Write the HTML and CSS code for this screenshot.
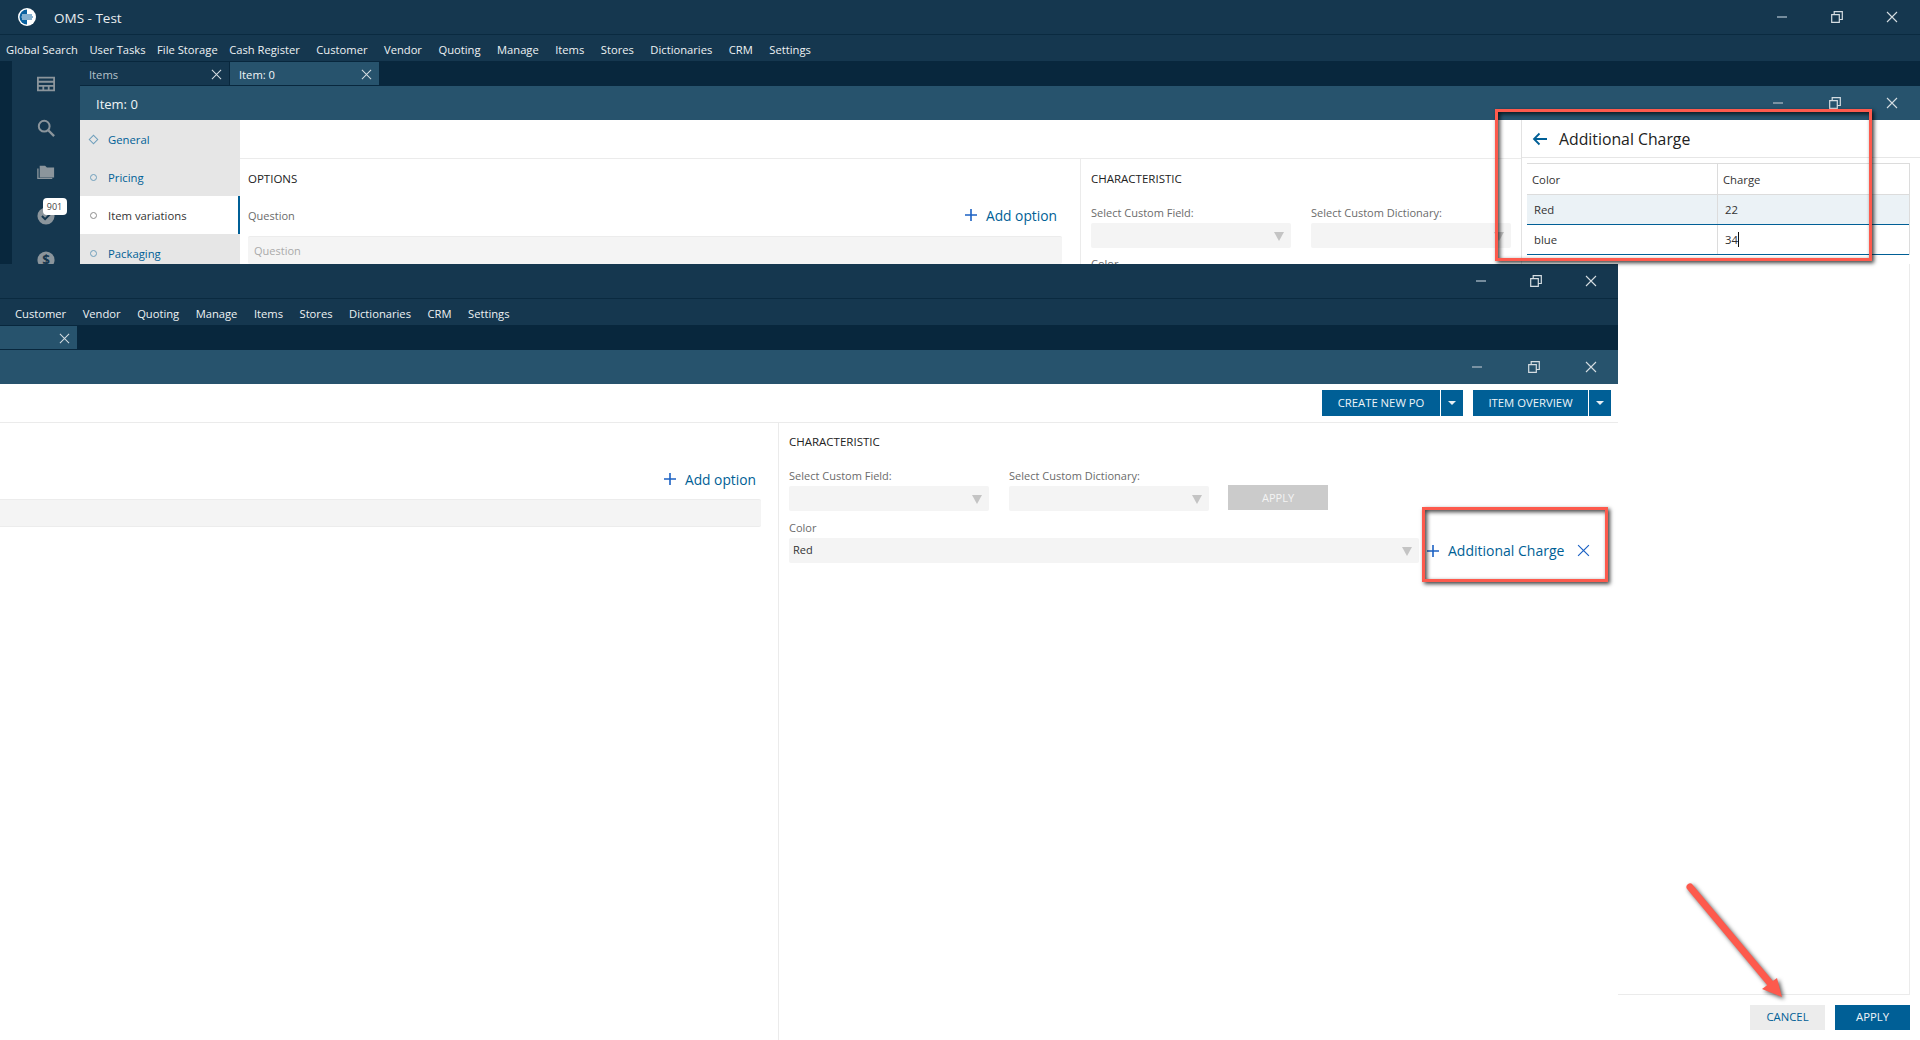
FILE: index.html
```html
<!DOCTYPE html>
<html lang="en">
<head>
<meta charset="utf-8">
<title>OMS - Test</title>
<link rel="stylesheet" href="styles.css">
</head>
<body>
<svg class="defs" width="0" height="0" aria-hidden="true">
  <symbol id="i-min" viewBox="0 0 12 12"><path d="M1 6h10" stroke="currentColor" stroke-width="1.6" fill="none"/></symbol>
  <symbol id="i-restore" viewBox="0 0 12 12"><path d="M.7 3.7h7.6v7.6H.7zM3.2 3.5V.7h8.1v7.8H8.5" stroke="currentColor" stroke-width="1.2" fill="none"/></symbol>
  <symbol id="i-x" viewBox="0 0 12 12"><path d="M1 1l10 10M11 1L1 11" stroke="currentColor" stroke-width="1.1" fill="none"/></symbol>
  <symbol id="i-plus" viewBox="0 0 12 12"><path d="M6 0v12M0 6h12" stroke="currentColor" stroke-width="1.6" fill="none"/></symbol>
</svg>

<div class="shot shot-top">
  <header class="titlebar">
    <svg class="logo" viewBox="0 0 18 18"><circle cx="9" cy="9" r="9" fill="#fff"/><path d="M9 1.5A7.5 7.5 0 0 0 9 16.500z" fill="#0a62a0"/><path d="M4 7h9M3.500 9h11M4 11h9" stroke="#fff" stroke-width="1"/><path d="M9 7h5M9 9h6M9 11h5" stroke="#0a62a0" stroke-width="1"/></svg>
    <span class="app-name">OMS - Test</span>
    <div class="winctl winctl-top">
      <svg class="ic-min"><use href="#i-min"/></svg>
      <svg class="ic-restore"><use href="#i-restore"/></svg>
      <svg class="ic-x"><use href="#i-x"/></svg>
    </div>
  </header>
  <nav class="menu">
    <div class="menu-group"><span>Global Search</span><span>User Tasks</span><span>File Storage</span><span>Cash Register</span></div>
    <span>Customer</span><span>Vendor</span><span>Quoting</span><span>Manage</span><span>Items</span><span>Stores</span><span>Dictionaries</span><span>CRM</span><span>Settings</span>
  </nav>
  <div class="shell">
    <aside class="rail">
      <div class="rail-strip"></div>
      <div class="rail-icons">
        <svg class="rail-ic" viewBox="0 0 20 16"><path d="M1 1h18v14H1zM1 5.500h18M1 10h18M7 10v5M13 10v5" fill="none" stroke="#8b959c" stroke-width="2"/></svg>
        <svg class="rail-ic" viewBox="0 0 20 20"><circle cx="8" cy="8" r="6" fill="none" stroke="#8b959c" stroke-width="2.2"/><path d="M12.500 12.500L19 19" stroke="#8b959c" stroke-width="2.600"/></svg>
        <svg class="rail-ic" viewBox="0 0 20 16"><path d="M3 1h6l2 2h8v11H3z" fill="#8b959c"/><path d="M1 4v11h16" fill="none" stroke="#8b959c" stroke-width="1.500"/></svg>
        <div class="rail-check">
          <svg class="rail-ic" viewBox="0 0 20 20"><circle cx="10" cy="10" r="9.500" fill="#8b959c"/><path d="M5.500 10l3.500 3.500 6-6" fill="none" stroke="#15374f" stroke-width="2.200"/></svg>
          <span class="badge">901</span>
        </div>
        <div class="rail-dollar">
          <svg class="rail-ic" viewBox="0 0 20 20"><circle cx="10" cy="10" r="9.500" fill="#8b959c"/><text x="10" y="15" text-anchor="middle" class="dollar">$</text></svg>
        </div>
      </div>
    </aside>
    <div class="work">
      <div class="tabs">
        <div class="tab"><span>Items</span><svg class="ic-tabx"><use href="#i-x"/></svg></div>
        <div class="tab tab-on"><span>Item: 0</span><svg class="ic-tabx"><use href="#i-x"/></svg></div>
      </div>
      <div class="winhead">
        <span>Item: 0</span>
        <div class="winctl winctl-sub">
          <svg class="ic-min"><use href="#i-min"/></svg>
          <svg class="ic-restore"><use href="#i-restore"/></svg>
          <svg class="ic-x"><use href="#i-x"/></svg>
        </div>
      </div>
      <div class="doc">
        <ul class="sidenav">
          <li class="done"><i class="dot dot-diamond"></i>General</li>
          <li><i class="dot"></i>Pricing</li>
          <li class="on"><i class="dot"></i>Item variations</li>
          <li><i class="dot"></i>Packaging</li>
        </ul>
        <div class="doc-main">
          <div class="toolbar"></div>
          <div class="panes">
            <section class="pane-options">
              <h3>OPTIONS</h3>
              <div class="q-row">
                <label>Question</label>
                <a class="link"><svg class="ic-plus"><use href="#i-plus"/></svg>Add option</a>
              </div>
              <div class="input input-ph">Question</div>
            </section>
            <section class="pane-char">
              <h3>CHARACTERISTIC</h3>
              <div class="field-row">
                <div class="field"><label>Select Custom Field:</label><div class="select"><i class="tri"></i></div></div>
                <div class="field"><label>Select Custom Dictionary:</label><div class="select"><i class="tri"></i></div></div>
              </div>
              <label class="color-label">Color</label>
            </section>
          </div>
        </div>
      </div>
    </div>
  </div>
</div>

<div class="lower">
  <div class="shot shot-bottom">
    <header class="titlebar">
      <div class="winctl winctl-top2">
        <svg class="ic-min"><use href="#i-min"/></svg>
        <svg class="ic-restore"><use href="#i-restore"/></svg>
        <svg class="ic-x"><use href="#i-x"/></svg>
      </div>
    </header>
    <nav class="menu menu-lower">
      <span>Customer</span><span>Vendor</span><span>Quoting</span><span>Manage</span><span>Items</span><span>Stores</span><span>Dictionaries</span><span>CRM</span><span>Settings</span>
    </nav>
    <div class="tabs">
      <div class="tab tab-on tab-cut"><svg class="ic-tabx"><use href="#i-x"/></svg></div>
    </div>
    <div class="winhead winhead-lower">
      <div class="winctl winctl-sub2">
        <svg class="ic-min"><use href="#i-min"/></svg>
        <svg class="ic-restore"><use href="#i-restore"/></svg>
        <svg class="ic-x"><use href="#i-x"/></svg>
      </div>
    </div>
    <div class="toolbar toolbar-lower">
      <div class="splitbtn"><button>CREATE NEW PO</button><button class="caret-btn"><i class="caret"></i></button></div>
      <div class="splitbtn splitbtn-b"><button>ITEM OVERVIEW</button><button class="caret-btn"><i class="caret"></i></button></div>
    </div>
    <div class="panes panes-lower">
      <section class="pane-options pane-options-lower">
        <div class="q-row q-row-lower">
          <a class="link"><svg class="ic-plus"><use href="#i-plus"/></svg>Add option</a>
        </div>
        <div class="input input-lower"></div>
      </section>
      <section class="pane-char">
        <h3>CHARACTERISTIC</h3>
        <div class="field-row">
          <div class="field"><label>Select Custom Field:</label><div class="select"><i class="tri"></i></div></div>
          <div class="field"><label>Select Custom Dictionary:</label><div class="select"><i class="tri"></i></div></div>
          <button class="apply-off">APPLY</button>
        </div>
        <label class="color-label">Color</label>
        <div class="color-row">
          <div class="select select-wide">Red<i class="tri"></i></div>
          <a class="link link-charge"><svg class="ic-plus"><use href="#i-plus"/></svg>Additional Charge</a>
          <svg class="ic-chargex"><use href="#i-x"/></svg>
        </div>
      </section>
    </div>
  </div>
  <aside class="side-rest">
    <div class="side-blank"></div>
    <div class="side-actions">
      <button class="btn-cancel">CANCEL</button>
      <button class="btn-apply">APPLY</button>
    </div>
  </aside>
</div>

<section class="charge-panel">
  <div class="charge-head">
    <svg class="ic-back" viewBox="0 0 16 14"><path d="M15 7H2M7.500 1.500L2 7l5.500 5.500" fill="none" stroke="#005f96" stroke-width="1.800"/></svg>
    <span>Additional Charge</span>
  </div>
  <div class="charge-table">
    <div class="ct-row ct-head"><div>Color</div><div>Charge</div></div>
    <div class="ct-row ct-sel"><div>Red</div><div>22</div></div>
    <div class="ct-row ct-edit"><div>blue</div><div>34<i class="cursor"></i></div></div>
  </div>
</section>

<div class="callout callout-panel"></div>
<div class="callout callout-charge"></div>
<svg class="callout-arrow" viewBox="0 0 120 140">
  <path d="M6 8L86 104" stroke="#fd5a4d" stroke-width="7" stroke-linecap="round" fill="none"/>
  <path d="M98 118L78 110 93 99z" fill="#fd5a4d"/>
</svg>
</body>
</html>
```
FILE: styles.css
```css
* { box-sizing: border-box; }
html, body { margin: 0; height: 1040px; overflow: hidden; }
body { background: #fff; font-family: "Open Sans", "Noto Sans", sans-serif; font-size: 11px; color: #333; position: relative; }
.defs { position: absolute; }
h3 { margin: 0; font-weight: 400; font-size: 11.500px; color: #222; line-height: 15px; }
label { color: #6b6b6b; font-size: 11px; }
ul { margin: 0; padding: 0; list-style: none; }
button { font-family: inherit; border: 0; margin: 0; padding: 0; }

.shot { display: flex; flex-direction: column; overflow: hidden; background: #fff; }
.shot-top { height: 264px; }

.titlebar { height: 35px; flex: none; background: #15374f; border-bottom: 1px solid #0a2a40; display: flex; align-items: center; position: relative; color: #e8edf0; }
.logo { width: 18px; height: 18px; margin: 0 0 1px 18px; }
.app-name { margin: 2px 0 0 18px; font-size: 13.500px; }

.winctl { display: flex; align-items: center; margin-left: auto; color: #d5dde2; }
.winctl svg { width: 12px; height: 12px; display: block; }
.winctl .ic-min { color: #8fa3b1; }
.winctl-top { padding-right: 22px; gap: 43px; }
.winctl-sub { padding-right: 22px; gap: 45px; }
.winctl-top2 { padding-right: 21px; gap: 43px; }
.winctl-sub2 { padding-right: 21px; gap: 45px; }

.menu { height: 26px; flex: none; background: #15374f; display: flex; align-items: center; padding: 2px 0 0 6px; gap: 16.500px; color: #eef2f4; font-size: 11.200px; }
.menu-group { display: flex; gap: 11.500px; }
.menu-lower { padding-left: 15px; }

.shell { flex: 1; display: flex; min-height: 0; }
.rail { width: 80px; flex: none; display: flex; background: #15374f; }
.rail-strip { width: 12px; background: #08273d; }
.rail-icons { flex: 1; display: flex; flex-direction: column; align-items: center; padding: 14px 1px 0 0; gap: 26px; }
.rail-ic { width: 18px; height: 18px; display: block; flex: none; }
.rail-check, .rail-dollar { position: relative; flex: none; }
.badge { position: absolute; left: 6px; top: -9px; width: 24px; height: 17px; background: #fff; border-radius: 4px; color: #444; font-size: 9px; text-align: center; line-height: 17px; }
.dollar { font-size: 15px; font-weight: 700; fill: #15374f; font-family: "Open Sans", sans-serif; }

.work { flex: 1; display: flex; flex-direction: column; min-width: 0; }
.tabs { height: 25px; flex: none; background: #08273d; display: flex; padding-top: 1px; }
.tab { width: 149px; margin-right: 1px; background: #15374f; color: #b6c2ca; display: flex; align-items: center; justify-content: space-between; padding: 1px 7px 0 9px; font-size: 11.200px; height: 23px; }
.tab-on { background: #27536d; color: #f2f5f7; }
.tab-cut { width: 77px; justify-content: flex-end; }
.ic-tabx { width: 11px; height: 11px; color: #d5dde2; }

.winhead { height: 34px; flex: none; background: #27536d; color: #f0f3f5; display: flex; align-items: center; padding-left: 16px; font-size: 13px; }
.winhead > span { margin-top: 1px; }
.winhead-lower { padding-left: 0; }

.doc { flex: 1; display: flex; min-height: 0; }
.sidenav { width: 160px; flex: none; background: #e6e6e6; }
.sidenav li { height: 38px; display: flex; align-items: center; padding-left: 10px; color: #005f96; font-size: 11.300px; }
.sidenav li.on { background: #fff; color: #333; box-shadow: inset -2px 0 0 #005f96; }
.dot { width: 7px; height: 7px; border: 1.500px solid #6f9fbc; border-radius: 50%; margin-right: 11px; flex: none; }
.sidenav li.on .dot { border-color: #8d8d8d; }
.dot-diamond { border-radius: 0; transform: rotate(45deg); }

.doc-main { flex: 1; display: flex; flex-direction: column; min-width: 0; }
.toolbar { height: 39px; flex: none; border-bottom: 1px solid #ebebeb; }
.panes { flex: 1; display: flex; min-height: 0; }
.pane-options { width: 841px; flex: none; padding: 12px 18px 0 8px; border-right: 1px solid #ebebeb; }
.q-row { display: flex; justify-content: space-between; align-items: center; height: 28px; margin-top: 15px; padding-right: 5px; }
.link { display: inline-flex; align-items: center; color: #005f96; font-size: 13.800px; }
.ic-plus { width: 12px; height: 12px; color: #1c62c4; margin-right: 9px; }
.input { height: 28px; background: #f4f4f4; border-top: 1px solid #ececec; border-radius: 2px; margin-top: 7px; padding: 6px; color: #aaa; font-size: 11px; }

.pane-char { flex: 1; padding: 12px 0 0 10px; min-width: 0; }
.panes-lower .pane-char { padding-top: 11px; }
.field-row { display: flex; gap: 20px; margin-top: 20px; }
.field { width: 200px; display: flex; flex-direction: column; }
.field label { height: 17px; line-height: 14px; }
.select { height: 25px; background: #f4f4f4; border-radius: 2px; position: relative; font-size: 11px; color: #333; padding: 4px; }
.tri { position: absolute; right: 7px; top: 9px; width: 0; height: 0; border: 5px solid transparent; border-top: 9px solid #c4c4c4; border-bottom: 0; }
.color-label { display: block; margin-top: 8px; height: 15px; line-height: 15px; }
.panes-lower .color-label { margin-top: 9px; }

.lower { height: 776px; display: flex; }
.shot-bottom { width: 1618px; flex: none; height: 776px; }
.toolbar-lower { display: flex; justify-content: flex-end; gap: 10px; padding: 6px 7px 0 0; }
.splitbtn { display: flex; gap: 1px; height: 26px; }
.splitbtn button { background: #005f96; color: #eef4f8; font-size: 11.300px; width: 118px; height: 26px; padding-bottom: 1px; }
.splitbtn-b button { width: 115px; }
.splitbtn .caret-btn { width: 22px; display: flex; align-items: center; justify-content: center; }
.caret { width: 0; height: 0; border: 4px solid transparent; border-top: 4px solid #e8eff4; border-bottom: 0; }

.pane-options-lower { width: 779px; padding: 0 17px 0 0; }
.q-row-lower { justify-content: flex-end; height: 28px; margin-top: 42px; padding-right: 5px; }
.input-lower { margin-top: 6px; border-radius: 0 2px 2px 0; border-bottom: 1px solid #ececec; }
.panes-lower .field-row { align-items: flex-end; }
.apply-off { width: 100px; height: 25px; background: #cbcbcb; color: #f4f4f4; font-size: 11px; margin: 0 0 1px -1px; }
.color-row { display: flex; align-items: center; height: 25px; margin-top: 3px; }
.select-wide { width: 630px; flex: none; }
.link-charge { margin-left: 8px; white-space: nowrap; font-size: 14px; }
.ic-chargex { width: 13px; height: 13px; color: #1c62c4; margin-left: 13px; }

.side-rest { flex: 1; display: flex; flex-direction: column; padding-right: 10px; }
.side-blank { height: 731px; flex: none; border-right: 1px solid #ebebeb; border-bottom: 1px solid #ebebeb; }
.side-actions { display: flex; justify-content: flex-end; gap: 10px; margin-top: 10px; }
.side-actions button { width: 75px; height: 25px; font-size: 11.300px; padding-bottom: 2px; }
.btn-cancel { background: #ececec; color: #005f96; }
.btn-apply { background: #005f96; color: #f0f5f8; }

/* floating panel opened over the top window */
.charge-panel { position: absolute; left: 1521px; top: 120px; width: 399px; height: 144px; background: #fff; border-left: 1px solid #e2e2e2; }
.charge-head { height: 38px; border-bottom: 1px solid #e6e6e6; display: flex; align-items: center; padding: 1px 0 0 10px; font-size: 15.800px; color: #222; }
.ic-back { width: 16px; height: 14px; margin-right: 11px; }
.charge-table { margin: 5px 0 0 5px; width: 383px; border-top: 1px solid #dcdcdc; border-right: 1px solid #dcdcdc; }
.ct-row { display: flex; height: 30px; font-size: 11.300px; color: #333; align-items: stretch; }
.ct-row > div { display: flex; align-items: center; padding-left: 7px; }
.ct-row > div:first-child { width: 191px; border-right: 1px solid #dcdcdc; }
.ct-head { height: 31px; border-bottom: 1px solid #dcdcdc; }
.ct-head > div { padding-left: 5px; }
.ct-sel { background: #ebf2f6; border-bottom: 1px solid #005f96; }
.ct-edit { border-bottom: 1px solid #005f96; }
.cursor { width: 1px; height: 15px; background: #111; display: inline-block; }

/* annotation overlays */
.callout { position: absolute; border: 3px solid #fd5a4d; box-shadow: 2px 2px 4px rgba(0,0,0,.75), inset 2px 2px 4px rgba(0,0,0,.75); }
.callout-panel { left: 1495px; top: 109px; width: 377px; height: 152px; }
.callout-charge { left: 1422px; top: 507px; width: 186px; height: 75px; }
.callout-arrow { position: absolute; left: 1684px; top: 879px; width: 120px; height: 140px; filter: drop-shadow(2px 2px 2px rgba(0,0,0,.65)); }
```
